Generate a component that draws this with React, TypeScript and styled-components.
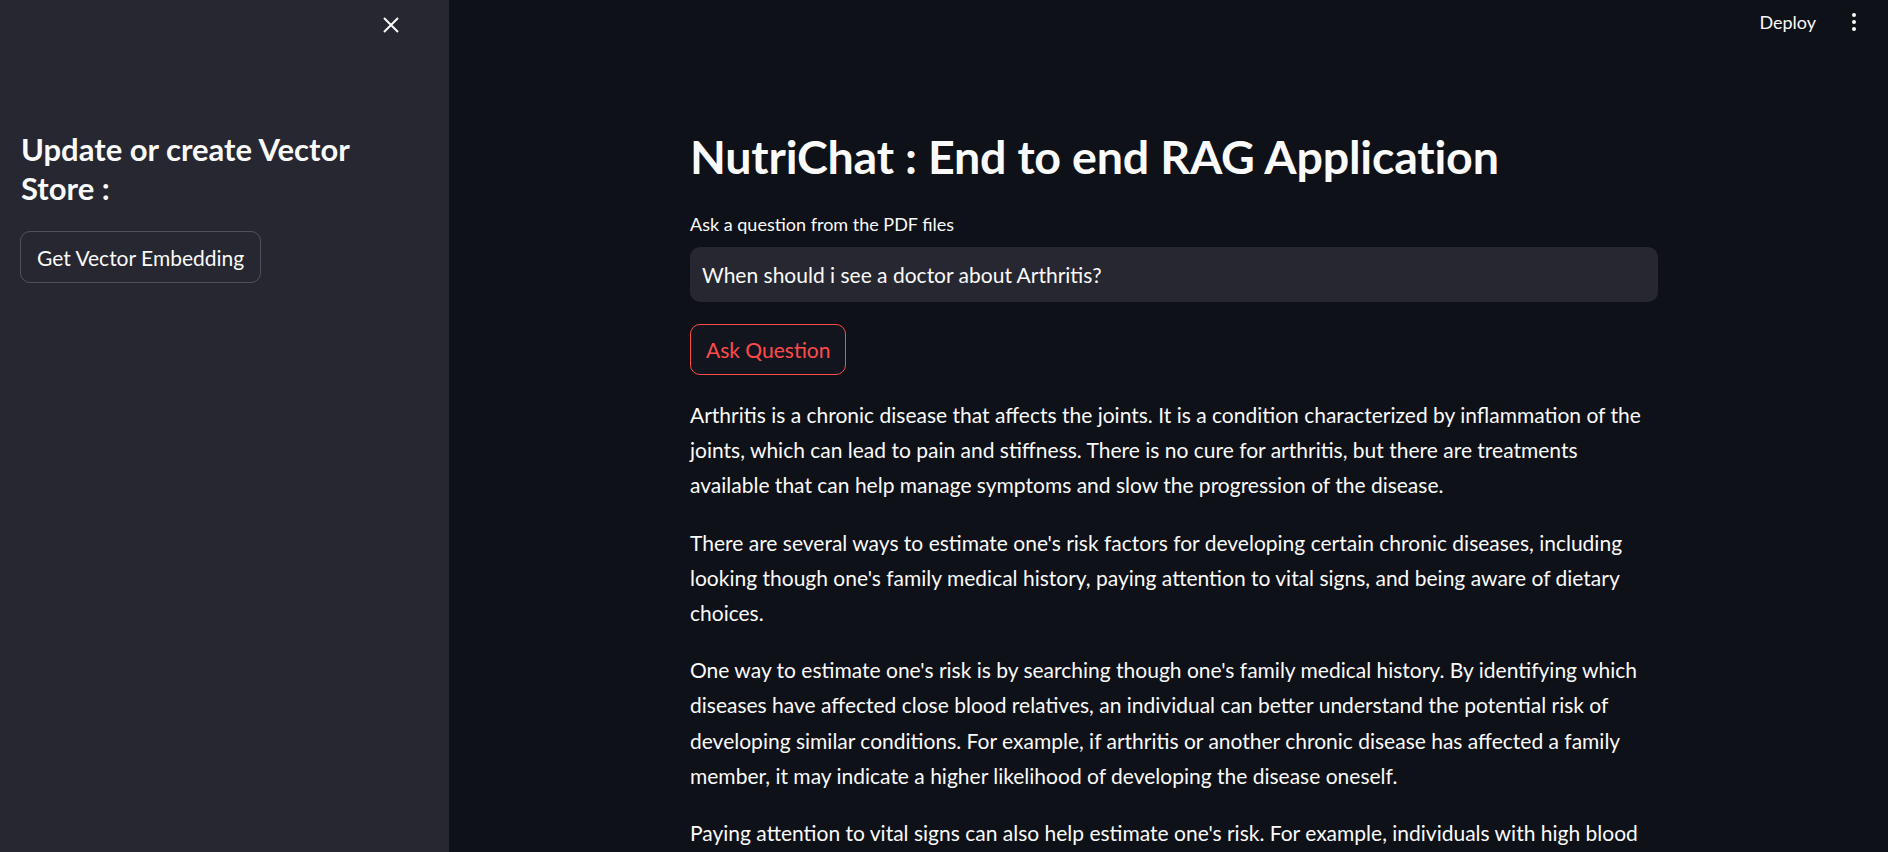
import React from 'react';
import styled, { createGlobalStyle } from 'styled-components';

const GlobalStyle = createGlobalStyle`
  * { box-sizing: border-box; }
  html, body { margin: 0; padding: 0; }
  body {
    background: #0e1117;
    color: #fafafa;
    font-family: "Lato", "Liberation Sans", sans-serif;
    overflow: hidden;
  }
`;

// ! layout
const Shell = styled.div`
  display: flex;
  width: 100vw;
  height: 100vh;
  overflow: hidden;
`;

const Sidebar = styled.aside`
  flex: 0 0 449px;
  background: #262730;
  display: flex;
  flex-direction: column;
  padding: 0 20px;
`;

const SidebarTop = styled.div`
  display: flex;
  justify-content: flex-end;
  padding: 17px 30px 0 0;
  height: 130px;
  flex-shrink: 0;
`;

const CloseBtn = styled.button`
  width: 16px;
  height: 16px;
  padding: 0;
  border: none;
  background: transparent;
  color: #fafafa;
  display: flex;
`;

const SideTitle = styled.h2`
  margin: 0 0 23px 1px;
  font-size: 31px;
  font-weight: 700;
  line-height: 39px;
  color: #fafafa;
  max-width: 360px;
`;

const Button = styled.button<{ $accent?: boolean }>`
  align-self: flex-start;
  flex-shrink: 0;
  height: ${(p) => (p.$accent ? 51 : 52)}px;
  padding: 0 ${(p) => (p.$accent ? 15 : 16)}px;
  border-radius: 10px;
  border: 1px solid ${(p) => (p.$accent ? '#ff4b4b' : 'rgba(250, 250, 250, 0.2)')};
  background: ${(p) => (p.$accent ? '#12151d' : 'transparent')};
  color: ${(p) => (p.$accent ? '#ff4b4b' : '#fafafa')};
  font-family: inherit;
  font-size: 21px;
  line-height: 1;
  cursor: pointer;
`;

const Main = styled.main`
  flex: 1;
  position: relative;
  display: flex;
  justify-content: center;
  align-items: flex-start;
  padding-left: 11px;
`;

const Header = styled.header`
  position: absolute;
  top: 0;
  right: 0;
  display: flex;
  align-items: center;
  gap: 36px;
  height: 44px;
  padding-right: 32px;
`;

const Deploy = styled.span`
  font-size: 18px;
  color: #fafafa;
`;

const Kebab = styled.span`
  display: flex;
  flex-direction: column;
  gap: 3px;

  i {
    display: block;
    width: 4px;
    height: 4px;
    border-radius: 50%;
    background: #fafafa;
  }
`;

const Content = styled.div`
  width: 968px;
  padding-top: 129px;
  display: flex;
  flex-direction: column;

  & > * {
    flex-shrink: 0;
  }
`;

const Title = styled.h1`
  margin: 0 0 26px;
  font-size: 46.6px;
  font-weight: 700;
  line-height: 55px;
  letter-spacing: -0.2px;
`;

const Label = styled.label`
  font-size: 18px;
  line-height: 28px;
  margin-bottom: 9px;
`;

const Input = styled.div`
  height: 55px;
  border-radius: 10px;
  background: #262730;
  display: flex;
  align-items: center;
  padding: 0 12px;
  font-size: 21px;
  color: #fafafa;
  margin-bottom: 22px;
`;

const Answer = styled.div`
  margin-top: 22px;

  p {
    margin: 0 0 22px;
    font-size: 21px;
    line-height: 35.2px;
  }
`;

export default function App() {
  return (
    <>
      <GlobalStyle />
      <Shell>
        <Sidebar>
          <SidebarTop>
            <CloseBtn aria-label="Close sidebar">
              <svg width="16" height="16" viewBox="0 0 16 16" fill="none" stroke="currentColor" strokeWidth="2">
                <path d="M1 1l14 14M15 1L1 15" />
              </svg>
            </CloseBtn>
          </SidebarTop>
          <SideTitle>Update or create Vector Store :</SideTitle>
          <Button>Get Vector Embedding</Button>
        </Sidebar>

        <Main>
          <Header>
            <Deploy>Deploy</Deploy>
            <Kebab>
              <i />
              <i />
              <i />
            </Kebab>
          </Header>

          <Content>
            <Title>NutriChat : End to end RAG Application</Title>
            <Label>Ask a question from the PDF files</Label>
            <Input>When should i see a doctor about Arthritis?</Input>
            <Button $accent>Ask Question</Button>

            {/* answer */}
            <Answer>
              <p>
                Arthritis is a chronic disease that affects the joints. It is a condition characterized by inflammation of the
                joints, which can lead to pain and stiffness. There is no cure for arthritis, but there are treatments
                available that can help manage symptoms and slow the progression of the disease.
              </p>
              <p>
                There are several ways to estimate one's risk factors for developing certain chronic diseases, including
                looking though one's family medical history, paying attention to vital signs, and being aware of dietary
                choices.
              </p>
              <p>
                One way to estimate one's risk is by searching though one's family medical history. By identifying which
                diseases have affected close blood relatives, an individual can better understand the potential risk of
                developing similar conditions. For example, if arthritis or another chronic disease has affected a family
                member, it may indicate a higher likelihood of developing the disease oneself.
              </p>
              <p>
                Paying attention to vital signs can also help estimate one's risk. For example, individuals with high blood
                pressure or high cholesterol levels may be at a higher risk of developing heart disease.
              </p>
            </Answer>
          </Content>
        </Main>
      </Shell>
    </>
  );
}
